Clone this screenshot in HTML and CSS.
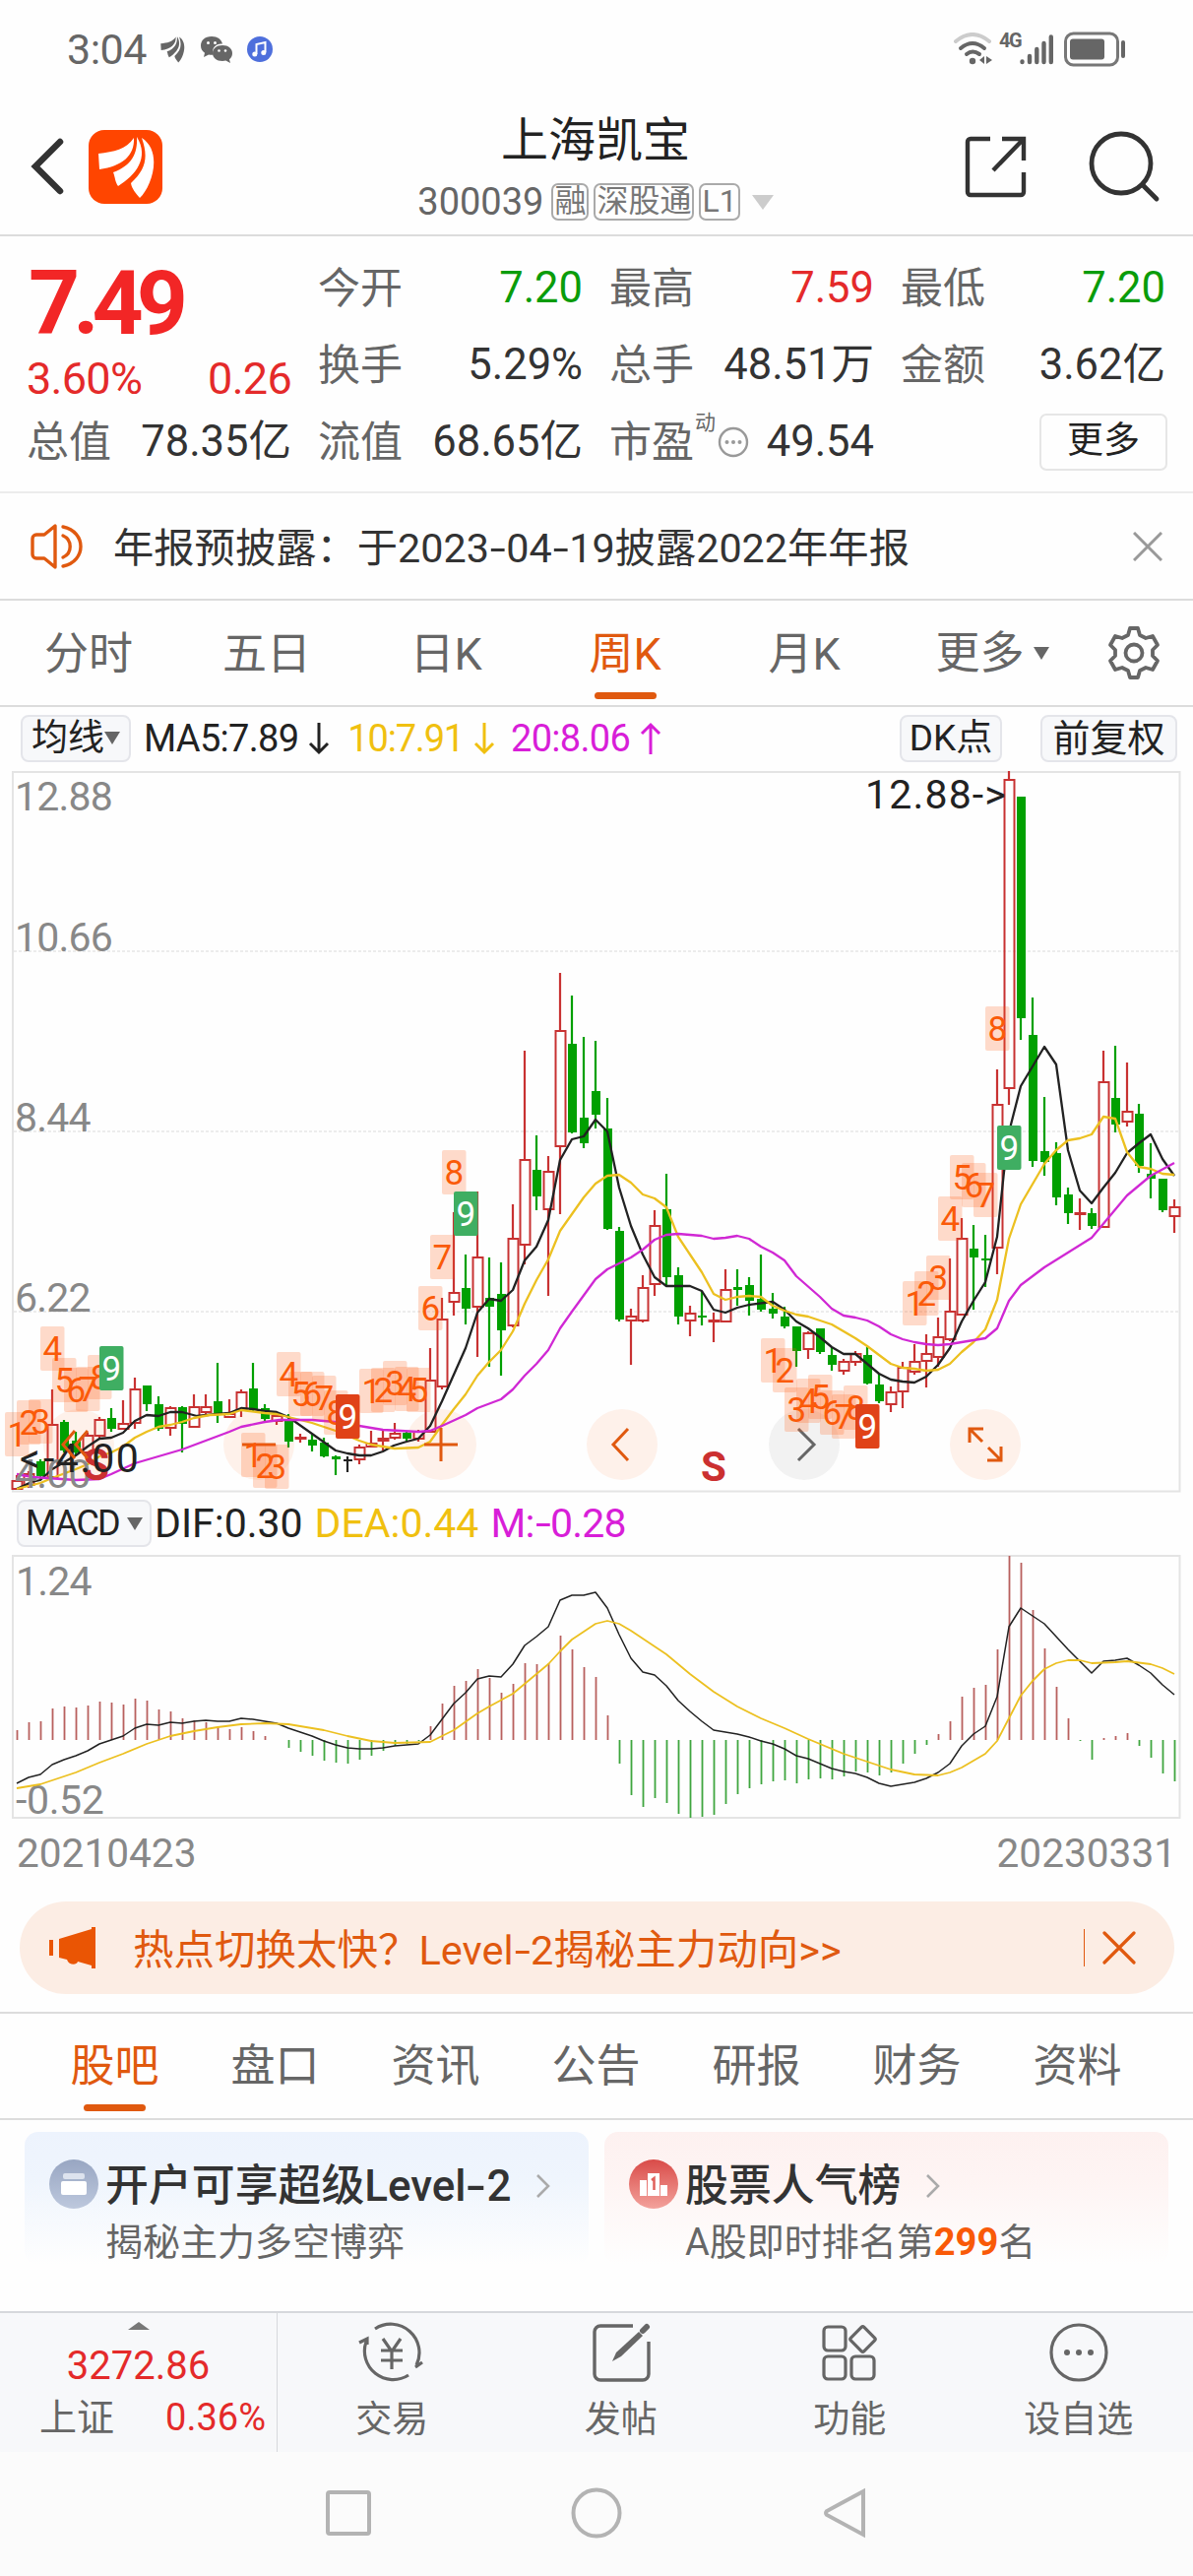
FILE: index.html
```html
<!DOCTYPE html>
<html lang="zh-CN">
<head>
    <meta charset="UTF-8">
    <meta name="viewport" content="width=device-width, initial-scale=1.0">
    <title>上海凯宝 300039</title>
    <link rel="stylesheet" href="styles.css">
</head>
<body>
    <svg class="defs" width="0" height="0">
        <defs>
            <g id="wings">
                <path d="M10 24C26 22 38 20 46 8C47 26 34 37 11 40Z"/>
                <path d="M49 7C50 24 44 36 25 43C27 48 27 53 30 57C48 46 62 28 49 7Z"/>
                <path d="M54 8C61 28 58 40 43 54C44 60 48 64 52 69C64 58 76 22 54 8Z"/>
            </g>
            <linearGradient id="blueDot" x1="0" y1="0" x2="0" y2="1">
                <stop offset="0" stop-color="#98a6c2"/><stop offset="1" stop-color="#bdc8dd"/>
            </linearGradient>
            <linearGradient id="redDot" x1="0" y1="0" x2="0" y2="1">
                <stop offset="0" stop-color="#d94b48"/><stop offset="1" stop-color="#f3a29c"/>
            </linearGradient>
        </defs>
    </svg>

    <div class="status-bar">
        <span class="clock">3:04</span>
        <svg class="st-wing" width="32" height="34" viewBox="0 0 75 75" fill="#666"><use href="#wings"/></svg>
        <svg class="st-chat" width="34" height="28" viewBox="0 0 34 28">
            <path fill="#666" d="M12 1C5 1 1 5 1 10.500c0 3.500 1.500 5.500 4 7.200L4 22l5-2.600c1.500.4 3 .4 4.500.3C11.500 12 17 8 23 8.600 22 4 18 1 12 1z"/>
            <path fill="#666" d="M23 10c-6 0-10 3.500-10 8s4 8 10 8c1.300 0 2.300-.2 3.400-.5L31 28l-1-3.800c2-1.400 3-3.400 3-6.200 0-4.500-4-8-10-8z"/>
            <g fill="#fff"><circle cx="8.500" cy="7.500" r="1.500"/><circle cx="15.500" cy="7.500" r="1.500"/><circle cx="19.500" cy="15.500" r="1.300"/><circle cx="26" cy="15.500" r="1.300"/></g>
        </svg>
        <svg class="st-music" width="28" height="28" viewBox="0 0 28 28">
            <circle cx="14" cy="14" r="13" fill="#4e6fdc"/>
            <path d="M10.500 19V9l9-2v10" fill="none" stroke="#fff" stroke-width="2"/>
            <circle cx="8.800" cy="19" r="2.500" fill="#fff"/><circle cx="17.800" cy="17.500" r="2.500" fill="#fff"/>
        </svg>
        <div class="status-right">
            <svg width="42" height="34" viewBox="0 0 42 34" fill="none" stroke="#666" stroke-width="4" stroke-linecap="round">
                <path d="M3 9Q20 -5 37 9" stroke="#ccc"/>
                <path d="M8 16Q20 6 32 16"/>
                <path d="M14 22Q20 17 27 22"/>
                <circle cx="20" cy="29" r="3.200" fill="#666" stroke="none"/>
                <path d="M32 24v8l-5-4zM34 24v8l6-4z" fill="#666" stroke="none"/>
            </svg>
            <span class="net">4G</span>
            <svg class="st-bars" width="36" height="34" viewBox="0 0 36 34" stroke="#666" stroke-width="4.400" stroke-linecap="round">
                <path d="M3.500 29.500v.5M11 24v6M18.300 17v13M25.500 11v19M32.800 4.500V30"/>
            </svg>
            <svg width="64" height="36" viewBox="0 0 64 36">
                <rect x="1.500" y="2" width="53" height="32" rx="8" fill="none" stroke="#777" stroke-width="3"/>
                <rect x="6" y="7.500" width="35" height="21" rx="3" fill="#666"/>
                <rect x="58" y="9" width="4" height="18" rx="2" fill="#666"/>
            </svg>
        </div>
    </div>

    <div class="header">
        <div class="header-left">
            <svg width="34" height="58" viewBox="0 0 34 58"><path d="M30 4L5 29L30 54" fill="none" stroke="#333" stroke-width="6.500" stroke-linecap="round"/></svg>
            <svg class="logo" width="75" height="75" viewBox="0 0 75 75"><rect width="75" height="75" rx="16" fill="#ff4500"/><use href="#wings" fill="#fff"/></svg>
        </div>
        <div class="header-title">
            <h1>上海凯宝</h1>
            <div class="code-row">
                <span class="code">300039</span><span class="tag">融</span><span class="tag">深股通</span><span class="tag">L1</span><i class="tri tri-light"></i>
            </div>
        </div>
        <div class="header-right">
            <svg width="64" height="64" viewBox="0 0 64 64" fill="none" stroke="#333" stroke-width="4.400">
                <path d="M26 4H6a3 3 0 0 0-3 3v51a3 3 0 0 0 3 3h51a3 3 0 0 0 3-3V38M38 4h22v22M59 5L29 36"/>
            </svg>
            <svg width="74" height="74" viewBox="0 0 74 74" fill="none" stroke="#333" stroke-width="4.800" stroke-linecap="round">
                <circle cx="34" cy="34" r="30"/><path d="M56 56L70 70"/>
            </svg>
        </div>
    </div>

    <div class="quote">
        <div class="price">
            <div class="price-now">7.49</div>
            <div class="price-change"><span>3.60%</span><span>0.26</span></div>
        </div>
        <div class="cell"><label>今开</label><b class="down">7.20</b></div>
        <div class="cell"><label>最高</label><b class="up">7.59</b></div>
        <div class="cell"><label>最低</label><b class="down">7.20</b></div>
        <div class="cell"><label>换手</label><b>5.29%</b></div>
        <div class="cell"><label>总手</label><b>48.51万</b></div>
        <div class="cell"><label>金额</label><b>3.62亿</b></div>
        <div class="cell"><label>总值</label><b>78.35亿</b></div>
        <div class="cell"><label>流值</label><b>68.65亿</b></div>
        <div class="cell"><label>市盈<sup>动</sup></label>
            <svg class="tip" width="32" height="32" viewBox="0 0 32 32"><circle cx="16" cy="16" r="14" fill="none" stroke="#999" stroke-width="2.400"/><g fill="#999"><circle cx="9.500" cy="16" r="2"/><circle cx="16" cy="16" r="2"/><circle cx="22.500" cy="16" r="2"/></g></svg>
            <b>49.54</b></div>
        <div class="cell cell-end"><span class="more-btn">更多</span></div>
    </div>

    <div class="notice">
        <svg width="54" height="48" viewBox="0 0 54 48" fill="none" stroke="#e0590f" stroke-width="3.400" stroke-linejoin="round" stroke-linecap="round">
            <path d="M25 3v42L14 36H6a4 4 0 0 1-4-4V16a4 4 0 0 1 4-4h8zM33 13a12 12 0 0 1 0 22M33 4c24 5 24 35 0 40"/>
        </svg>
        <span class="notice-text">年报预披露：于2023<em>-</em>04<em>-</em>19披露2022年年报</span>
        <svg width="30" height="30" viewBox="0 0 30 30" stroke="#999" stroke-width="3"><path d="M1 1L29 29M29 1L1 29"/></svg>
    </div>

    <div class="period-tabs">
        <div class="tab">分时</div>
        <div class="tab">五日</div>
        <div class="tab">日K</div>
        <div class="tab active">周K</div>
        <div class="tab">月K</div>
        <div class="tab tab-more">更多<i class="tri"></i></div>
        <div class="tab-gear">
            <svg width="56" height="56" viewBox="0 0 56 56" fill="none" stroke="#666" stroke-width="3.800" stroke-linejoin="round">
                <path d="M24 3h8l2 7 6 3 7-2 5 9-5 5v6l5 5-5 9-7-2-6 3-2 7h-8l-2-7-6-3-7 2-5-9 5-5v-6l-5-5 5-9 7 2 6-3z"/>
                <circle cx="28" cy="28" r="8.500"/>
            </svg>
        </div>
    </div>

    <div class="ind-row">
        <span class="chip">均线<i class="tri tri-sm"></i></span>
        <span class="ma ma5">MA5:7.89<svg width="22" height="34" viewBox="0 0 22 34"><path d="M11 1V31M2 22L11 31L20 22"/></svg></span>
        <span class="ma ma10">10:7.91<svg width="22" height="34" viewBox="0 0 22 34"><path d="M11 1V31M2 22L11 31L20 22"/></svg></span>
        <span class="ma ma20">20:8.06<svg width="22" height="34" viewBox="0 0 22 34"><path d="M11 33V3M2 12L11 3L20 12"/></svg></span>
        <span class="chip chip-dk">DK点</span>
        <span class="chip chip-fq">前复权</span>
    </div>

    <svg id="kline" class="chart" width="1212" height="732" viewBox="0 783 1212 732"></svg>

    <div class="macd-row">
        <span class="chip chip-macd">MACD<i class="tri tri-sm"></i></span>
        <span class="dif">DIF:0.30</span>
        <span class="dea">DEA:0.44</span>
        <span class="m">M:<em>-</em>0.28</span>
    </div>

    <svg id="macd" class="chart" width="1212" height="268" viewBox="0 1579 1212 268"></svg>

    <div class="dates"><span>20210423</span><span>20230331</span></div>

    <div class="banner">
        <svg width="48" height="42" viewBox="0 0 48 42" fill="#ea5504">
            <path d="M0 13h4v16H0zM10 12L43 2V0h4v42h-4v-3l-14-4c-1 4-9 4-11-2l-8-2z"/>
        </svg>
        <span class="banner-text">热点切换太快？Level<em>-</em>2揭秘主力动向&gt;&gt;</span>
        <i class="banner-sep"></i>
        <svg width="34" height="34" viewBox="0 0 34 34" stroke="#e0590f" stroke-width="3.200" stroke-linecap="round"><path d="M2 2L32 32M32 2L2 32"/></svg>
    </div>

    <div class="info-tabs">
        <div class="tab active">股吧</div>
        <div class="tab">盘口</div>
        <div class="tab">资讯</div>
        <div class="tab">公告</div>
        <div class="tab">研报</div>
        <div class="tab">财务</div>
        <div class="tab">资料</div>
    </div>

    <div class="cards">
        <div class="card card-blue">
            <svg class="card-icon" width="50" height="50" viewBox="0 0 50 50"><circle cx="25" cy="25" r="25" fill="url(#blueDot)"/><rect x="14" y="14" width="22" height="6" rx="2" fill="#dde3ee"/><rect x="12" y="22" width="26" height="14" rx="2" fill="#fff"/></svg>
            <div>
                <div class="card-title">开户可享超级Level<em>-</em>2<svg width="16" height="26" viewBox="0 0 16 26"><path d="M2 2L13 13L2 24"/></svg></div>
                <div class="card-sub">揭秘主力多空博弈</div>
            </div>
        </div>
        <div class="card card-red">
            <svg class="card-icon" width="50" height="50" viewBox="0 0 50 50"><circle cx="25" cy="25" r="25" fill="url(#redDot)"/><path d="M11 21h7v16h-7zM19 14h12v23H19zM32 26h7v11h-7z" fill="#fff"/><path d="M23 21l2.500-2v12" fill="none" stroke="#e0605b" stroke-width="2.500"/></svg>
            <div>
                <div class="card-title">股票人气榜<svg width="16" height="26" viewBox="0 0 16 26"><path d="M2 2L13 13L2 24"/></svg></div>
                <div class="card-sub">A股即时排名第<strong>299</strong>名</div>
            </div>
        </div>
    </div>

    <div class="bottom-bar">
        <div class="index-cell">
            <i class="caret-up"></i>
            <div class="index-value">3272.86</div>
            <div class="index-row"><span>上证</span><span class="up">0.36%</span></div>
        </div>
        <div class="nav-item">
            <svg width="70" height="62" viewBox="0 0 70 62" fill="none" stroke="#666" stroke-width="3.200">
                <path d="M18 7A29 29 0 0 1 60 44M66 41l-7 5M52 54A29 29 0 0 1 9 20M2 21l8-4v6"/>
                <path d="M26 17l9 13 9-13M35 30v18M24 29h22M24 39h22"/>
            </svg>
            <span>交易</span>
        </div>
        <div class="nav-item">
            <svg width="60" height="62" viewBox="0 0 60 62" fill="none" stroke="#666" stroke-width="3.400">
                <path d="M42 4H9a6 6 0 0 0-6 6v43a6 6 0 0 0 6 6h43a6 6 0 0 0 6-6V20"/>
                <path d="M21 40l4-9L48 10l4 4-22 21z" fill="#666" stroke="none"/><path d="M52 9l4-4" stroke-width="6" stroke-linecap="round"/>
            </svg>
            <span>发帖</span>
        </div>
        <div class="nav-item">
            <svg width="60" height="62" viewBox="0 0 60 62" fill="none" stroke="#666" stroke-width="3.200">
                <rect x="4" y="5" width="22" height="24" rx="4"/><rect x="4" y="35" width="22" height="23" rx="4"/><rect x="32" y="35" width="23" height="23" rx="4"/>
                <rect x="34" y="8" width="19" height="19" rx="2" transform="rotate(45 43.500 17.500)"/>
            </svg>
            <span>功能</span>
        </div>
        <div class="nav-item">
            <svg width="60" height="62" viewBox="0 0 60 62" fill="none" stroke="#666" stroke-width="3.200">
                <circle cx="30" cy="31" r="28"/><g fill="#666" stroke="none"><circle cx="18" cy="31" r="3"/><circle cx="30" cy="31" r="3"/><circle cx="42" cy="31" r="3"/></g>
            </svg>
            <span>设自选</span>
        </div>
    </div>

    <div class="sys-nav">
        <svg width="46" height="48" viewBox="0 0 46 48"><rect x="2" y="3" width="42" height="42" rx="2"/></svg>
        <svg width="52" height="52" viewBox="0 0 52 52"><circle cx="26" cy="26" r="23.500"/></svg>
        <svg width="48" height="52" viewBox="0 0 48 52"><path d="M42 4V48L5 28Q3 26 5 24Z"/></svg>
    </div>

    <script src="chart.js"></script>
</body>
</html>
```
FILE: styles.css
```css
* {
    margin: 0;
    padding: 0;
    box-sizing: border-box;
}

body {
    width: 1212px;
    height: 2616px;
    background-color: #fefefe;
    color: #333;
    font-family: Roboto, "Noto Sans CJK SC", sans-serif;
    overflow: hidden;
}

svg {
    display: block;
    flex: none;
}

.defs {
    position: absolute;
}

/* wide dash, longer than the font's hyphen */
em {
    display: inline-block;
    font-style: normal;
    transform: scaleX(1.4);
    margin: 0 3px;
}

.up {
    color: #e42a2a;
}

.down {
    color: #0a9c0a;
}

.tri {
    display: inline-block;
    border-left: 8px solid transparent;
    border-right: 8px solid transparent;
    border-top: 13px solid #666;
}

.tri-light {
    border-left-width: 11px;
    border-right-width: 11px;
    border-top: 15px solid #ccc;
    margin-left: 7px;
}

/* status bar */
.status-bar {
    height: 100px;
    padding: 0 67px 0 68px;
    display: flex;
    align-items: center;
}

.clock {
    font-size: 43px;
    color: #666;
    width: 91px;
    letter-spacing: -0.5px;
}

.st-chat {
    margin-left: 12px;
}

.st-music {
    margin-left: 13px;
}

.status-right {
    margin-left: auto;
    display: flex;
    align-items: center;
}

.net {
    font-size: 20px;
    font-weight: 700;
    color: #666;
    align-self: flex-start;
    line-height: 18px;
    width: 20px;
    margin-left: 5px;
    letter-spacing: -1.5px;
}

.st-bars {
    margin-right: 10px;
}

/* header */
.header {
    height: 140px;
    border-bottom: 2px solid #dcdcdc;
    display: flex;
    justify-content: space-between;
    padding: 0 33px 0 31px;
}

.header-left,
.header-right {
    display: flex;
    align-items: center;
    width: 220px;
}

.header-right {
    justify-content: flex-end;
    gap: 61px;
}

.logo {
    margin-left: 25px;
}

.header-title {
    display: flex;
    flex-direction: column;
    align-items: center;
    padding-top: 14px;
}

.header-title h1 {
    font-size: 48px;
    font-weight: 400;
    line-height: 58px;
    color: #222;
}

.code-row {
    display: flex;
    align-items: center;
    margin-top: 14px;
    height: 38px;
}

.code {
    font-size: 38px;
    color: #666;
    margin-right: 8px;
}

.tag {
    height: 38px;
    border: 2px solid #aaa;
    border-radius: 7px;
    font-size: 32px;
    line-height: 33px;
    padding: 0 1px;
    margin-right: 5px;
    color: #777;
}

/* quote grid */
.quote {
    height: 261px;
    border-bottom: 2px solid #ececec;
    padding: 14px 27px 0;
    display: grid;
    grid-template-columns: repeat(4, 269px);
    grid-template-rows: repeat(3, 78px);
    column-gap: 27px;
}

.price {
    grid-row: span 2;
}

.price-now {
    font-size: 91px;
    font-weight: 700;
    line-height: 108px;
    color: #f22626;
    letter-spacing: -7px;
    padding-left: 2px;
}

.price-change {
    display: flex;
    justify-content: space-between;
    font-size: 45px;
    line-height: 46px;
    color: #e42a2a;
    letter-spacing: -0.7px;
}

.cell {
    display: flex;
    align-items: center;
    justify-content: space-between;
    font-size: 43px;
    line-height: 78px;
    white-space: nowrap;
}

.cell label {
    color: #666;
    position: relative;
}

.cell b {
    font-size: 43.500px;
    font-weight: 400;
}

.cell sup {
    position: absolute;
    left: 87px;
    top: -20px;
    font-size: 21px;
}

.tip {
    margin-left: 24px;
    margin-right: auto;
}

.cell-end {
    justify-content: flex-end;
    padding-right: 0;
}

.more-btn {
    width: 130px;
    height: 58px;
    margin-right: -2px;
    border: 2px solid #e6e6e6;
    border-radius: 7px;
    font-size: 37px;
    line-height: 52px;
    text-align: center;
    color: #222;
}

/* notice */
.notice {
    height: 109px;
    border-bottom: 2px solid #dcdcdc;
    display: flex;
    align-items: center;
    padding: 0 31px;
}

.notice-text {
    flex: 1;
    margin-left: 30px;
    font-size: 41.300px;
    padding-bottom: 4px;
}

/* tabs */
.period-tabs,
.info-tabs {
    display: flex;
    height: 108px;
    border-bottom: 2px solid #dcdcdc;
}

.tab {
    width: 182px;
    font-size: 45px;
    line-height: 108px;
    text-align: center;
    color: #666;
    display: flex;
    flex-direction: column;
    align-items: center;
}

.period-tabs .tab {
    height: 106px;
    line-height: 109px;
}

.period-tabs .tab:first-child {
    width: 180px;
}

.period-tabs .tab-more {
    width: 184px;
    padding-left: 16px;
    flex-direction: row;
    justify-content: center;
    gap: 9px;
}

.tab.active {
    color: #e0590f;
}

.tab.active::after {
    content: "";
    width: 63px;
    height: 7px;
    border-radius: 4px;
    background-color: #e0590f;
    margin-top: -16px;
    flex: none;
}

.tab-gear {
    display: flex;
    align-items: center;
    justify-content: center;
    width: 120px;
}

/* indicator rows */
.ind-row,
.macd-row {
    display: flex;
    align-items: center;
    white-space: nowrap;
    color: #222;
}

.ind-row {
    height: 65px;
    padding: 0 16px 2px 21px;
    font-size: 38px;
}

.chip {
    display: flex;
    align-items: center;
    justify-content: center;
    height: 48px;
    padding: 0 9px;
    border: 2px solid #e4e5ea;
    border-radius: 8px;
    background-color: #f7f8fa;
    font-size: 37px;
    line-height: 40px;
}

.chip-dk {
    margin-left: auto;
    margin-right: 39px;
    width: 104px;
}

.chip-fq {
    width: 139px;
    font-size: 38px;
}

.chip-macd {
    width: 137px;
    font-size: 36px;
    letter-spacing: -1.8px;
    gap: 8px;
}

.ma {
    display: flex;
    align-items: center;
    margin-left: 13px;
    letter-spacing: -0.7px;
}

.ma svg {
    fill: none;
    stroke: currentColor;
    stroke-width: 3;
    margin-left: 10px;
}

.ma10,
.dea {
    color: #f0c010;
}

.ma10 {
    letter-spacing: -1.2px;
    margin-left: 18px;
}

.ma20,
.m {
    color: #d81ed8;
}

.ma20 {
    margin-left: 16px;
}

.chart {
    font-size: 41px;
    letter-spacing: -0.8px;
    overflow: visible;
}

.macd-row {
    height: 64px;
    padding-left: 17px;
    font-size: 41px;
    gap: 12px;
}

.dif {
    margin-left: -9px;
}

.m {
    letter-spacing: -0.8px;
}

.dates {
    display: flex;
    justify-content: space-between;
    padding: 7px 17px 0;
    height: 84px;
    font-size: 40.600px;
    line-height: 56px;
    color: #888;
}

/* banner */
.banner {
    margin: 0 19px 18px 20px;
    height: 94px;
    border-radius: 47px;
    background-color: #fcede4;
    color: #e0590f;
    display: flex;
    align-items: center;
    padding: 0 39px 0 30px;
}

.banner-text {
    flex: 1;
    margin-left: 37px;
    font-size: 41.500px;
    padding-bottom: 3px;
}

.banner-sep {
    width: 1px;
    height: 38px;
    background-color: #e0590f;
    margin-right: 18px;
}

.info-tabs {
    border-top: 2px solid #dcdcdc;
    height: 110px;
    padding-left: 35px;
}

.info-tabs .tab {
    width: 163px;
    height: 106px;
}

/* cards */
.cards {
    display: flex;
    gap: 16px;
    padding: 12px 25px 0;
    height: 194px;
}

.card {
    width: 573px;
    height: 135px;
    border-radius: 14px;
    display: flex;
    padding: 28px 0 0 25px;
}

.card-blue {
    background: linear-gradient(to bottom, #edf3fd, #eff5fd 35%, #fefefe);
}

.card-red {
    background: linear-gradient(to bottom, #fdf1f0, #fef4f3 35%, #fefefe);
}

.card-title {
    display: flex;
    align-items: center;
    font-size: 43.900px;
    font-weight: 500;
    line-height: 54px;
    margin-left: 7px;
    white-space: nowrap;
}

.card-title svg {
    margin-left: 25px;
    fill: none;
    stroke: #aaa;
    stroke-width: 2.600;
}

.card-sub {
    font-size: 38px;
    line-height: 50px;
    margin: 5px 0 0 7px;
    color: #666;
    white-space: nowrap;
}

.card-sub strong {
    color: #f95a08;
}

/* bottom bar */
.bottom-bar {
    height: 143px;
    border-top: 2px solid #d6d8dc;
    background-color: #f7f8fa;
    display: flex;
}

.index-cell {
    width: 282px;
    border-right: 1px solid #d6d8dc;
    display: flex;
    flex-direction: column;
    align-items: center;
}

.caret-up {
    border-left: 11px solid transparent;
    border-right: 11px solid transparent;
    border-bottom: 8px solid #777;
    margin-top: 9px;
}

.index-value {
    font-size: 40px;
    line-height: 50px;
    margin-top: 12px;
    color: #e42a2a;
}

.index-row {
    display: flex;
    justify-content: space-between;
    align-self: stretch;
    padding: 0 11px 0 40px;
    font-size: 38px;
    line-height: 54px;
    color: #666;
}

.index-row .up {
    color: #e42a2a;
}

.nav-item {
    width: 232.500px;
    display: flex;
    flex-direction: column;
    align-items: center;
    padding-top: 9px;
    font-size: 37px;
    color: #666;
}

.nav-item span {
    line-height: 50px;
    margin-top: 13px;
}

.sys-nav {
    height: 126px;
    background-color: #fbfbfb;
    display: flex;
    align-items: center;
    padding: 0 0 2px 331px;
    gap: 203px;
    fill: none;
    stroke: #b3b3b3;
    stroke-width: 4;
}
```
FILE: chart.js
```js
// candle: [colour, high, low, top, bottom]
const candles = [
    ['r',1498,1513,1504,1512],['r',1494,1511,1497,1508],['g',1482,1502,1484,1499],['r',1411,1501,1447,1500],
    ['g',1442,1475,1444,1473],['g',1454,1478,1463,1475],['r',1455,1482,1458,1475],['r',1439,1460,1442,1458],
    ['g',1430,1454,1440,1451],['r',1422,1452,1446,1451],['r',1399,1451,1411,1445],['g',1407,1433,1407,1426],
    ['g',1418,1453,1426,1451],['r',1428,1458,1430,1450],['g',1428,1475,1429,1446],['r',1416,1450,1429,1449],
    ['r',1416,1436,1429,1434],['g',1384,1445,1423,1436],['r',1421,1440,1436,1439],['r',1411,1439,1414,1432],
    ['g',1384,1433,1410,1432],['g',1426,1443,1430,1441],['r',1435,1447,1438,1443],['g',1436,1470,1441,1464],
    ['r',1456,1465,1460,1461],['g',1457,1474,1462,1468],['g',1460,1480,1465,1479],['g',1478,1498,1479,1482],
    ['k',1479,1495,1482,1484],['r',1467,1487,1470,1482],['r',1453,1470,1466,1469],['r',1453,1473,1461,1463],
    ['r',1445,1462,1456,1460],['g',1453,1463,1455,1461],['r',1452,1464,1454,1461],['r',1369,1455,1402,1454],
    ['r',1318,1411,1340,1408],['r',1231,1336,1313,1322],['g',1274,1345,1308,1329],['r',1210,1378,1277,1327],
    ['g',1277,1388,1318,1327],['g',1282,1397,1314,1351],['r',1223,1348,1258,1346],['r',1067,1284,1178,1264],
    ['g',1153,1229,1188,1215],['r',1174,1316,1190,1228],['r',988,1233,1047,1164],['g',1011,1151,1060,1150],
    ['g',1053,1166,1135,1161],['g',1057,1146,1108,1132],['g',1115,1249,1146,1248],['g',1246,1342,1250,1340],
    ['r',1329,1386,1337,1341],['r',1295,1343,1308,1341],['r',1229,1316,1245,1304],['g',1192,1307,1228,1297],
    ['g',1287,1345,1295,1337],['r',1326,1357,1334,1341],['g',1311,1346,1336,1338],['r',1333,1363,1341,1342],
    ['r',1289,1343,1310,1342],['g',1289,1326,1307,1310],['g',1297,1336,1305,1321],['g',1274,1332,1319,1330],
    ['g',1313,1339,1329,1334],['g',1327,1349,1337,1347],['g',1347,1388,1347,1372],['r',1352,1380,1354,1370],
    ['g',1349,1375,1349,1373],['g',1368,1392,1376,1386],['r',1380,1396,1383,1392],['r',1372,1387,1375,1383],
    ['g',1368,1406,1376,1405],['g',1395,1425,1406,1423],['r',1408,1434,1414,1426],['r',1383,1430,1389,1413],
    ['r',1365,1396,1383,1393],['r',1355,1409,1375,1382],['r',1338,1388,1358,1378],['r',1278,1362,1332,1360],
    ['r',1237,1336,1258,1335],['g',1244,1330,1268,1277],['g',1254,1307,1278,1280],['r',1086,1294,1122,1267],
    ['r',783,1122,792,1105],['g',809,1056,809,1034],['g',1013,1185,1051,1179],['g',1114,1194,1169,1180],
    ['g',1160,1224,1171,1216],['g',1206,1243,1213,1232],['r',1217,1249,1232,1233],['g',1227,1248,1232,1245],
    ['r',1067,1247,1099,1246],['g',1062,1150,1115,1142],['r',1079,1144,1129,1139],['g',1121,1191,1131,1184],
    ['g',1161,1217,1192,1197],['g',1197,1231,1197,1229],['r',1218,1252,1226,1235]
];

const ma5 = '17,1512 32,1505 41,1503 53,1492 65,1485 77,1478 89,1469 101,1461 113,1460 125,1455 137,1443 149,1437 161,1438 173,1434 185,1434 200,1438 221,1436 233,1435 245,1430 257,1431 269,1433 281,1434 293,1439 341,1473 353,1476 365,1478 377,1478 389,1474 400,1468 413,1464 425,1461 437,1448 449,1423 461,1396 473,1369 485,1333 497,1319 509,1321 521,1310 533,1280 545,1266 557,1239 569,1178 581,1157 593,1154 605,1137 617,1149 629,1206 641,1245 653,1274 665,1297 677,1306 701,1306 713,1311 725,1330 737,1333 749,1328 761,1325 785,1322 797,1330 809,1342 821,1349 833,1358 845,1368 857,1375 869,1375 881,1385 893,1395 905,1401 917,1403 929,1404 941,1398 953,1386 965,1369 977,1342 989,1321 1001,1302 1013,1256 1020,1190 1027,1142 1037,1103 1049,1083 1061,1063 1073,1081 1085,1168 1097,1209 1109,1222 1121,1206 1133,1191 1145,1171 1157,1161 1169,1152 1181,1177 1193,1194';
const ma10 = '17,1512 41,1506 53,1501 77,1492 89,1487 101,1479 113,1475 125,1469 137,1460 149,1454 161,1449 173,1447 185,1444 197,1440 213,1437 233,1436 245,1432 269,1435 281,1436 293,1439 317,1445 341,1453 365,1463 377,1467 389,1469 401,1471 425,1470 437,1464 449,1447 461,1431 473,1416 485,1397 497,1383 509,1371 521,1352 533,1324 545,1300 557,1279 569,1250 581,1233 593,1216 605,1202 617,1194 629,1193 641,1201 653,1213 665,1217 677,1226 689,1256 701,1274 713,1292 725,1314 737,1320 749,1317 761,1316 773,1317 785,1326 797,1331 809,1335 821,1337 833,1341 845,1345 857,1352 869,1359 881,1367 893,1376 905,1385 917,1389 929,1390 941,1392 953,1391 965,1385 977,1373 989,1363 1001,1350 1013,1320 1025,1258 1037,1223 1061,1182 1073,1168 1085,1158 1097,1156 1109,1152 1121,1134 1133,1136 1145,1170 1157,1185 1169,1187 1181,1192 1193,1193';
const ma20 = '17,1497 33,1500 77,1503 101,1502 113,1497 137,1486 161,1479 185,1472 209,1463 233,1454 245,1449 269,1444 284,1442 317,1442 341,1444 365,1448 389,1452 425,1454 437,1453 449,1448 473,1437 485,1430 509,1421 521,1411 533,1397 545,1385 557,1371 569,1349 581,1332 605,1299 617,1289 641,1277 653,1269 665,1259 677,1254 689,1253 713,1255 725,1258 737,1257 749,1255 761,1258 773,1266 785,1272 797,1280 809,1296 833,1317 845,1329 857,1336 869,1338 881,1341 893,1347 905,1355 917,1360 929,1363 941,1365 953,1366 965,1365 977,1363 1001,1359 1013,1349 1025,1321 1037,1305 1061,1287 1085,1272 1109,1257 1145,1214 1169,1194 1193,1181';

// badge: [candle index, digit, top, fill]
const badges = [
    [0,1,1434],[1,2,1422],[2,3,1421],[3,4,1347],[4,5,1379],[5,6,1389],[6,7,1388],[7,8,1376],[8,9,1367,'#3fae62'],
    [20,1,1455],[21,2,1466],[22,3,1467],[23,4,1373],[24,5,1393],[25,6,1393],[26,7,1397],[27,8,1412],[28,9,1416,'#e04218'],
    [30,1,1390],[31,2,1389],[32,3,1382],[33,4,1388],[34,5,1389],[35,6,1306],[36,7,1254],[37,8,1168],[38,9,1210,'#3fae62'],
    [64,1,1359],[65,2,1369],[66,3,1409],[67,4,1400],[68,5,1396],[69,6,1412],[70,7,1416],[71,8,1407],[72,9,1426,'#e04218'],
    [76,1,1301],[77,2,1291],[78,3,1275],[79,4,1215],[80,5,1173],[81,6,1181],[82,7,1191],[83,8,1022],[84,9,1143,'#3fae62']
];

const x = i => 17 + 12 * i;
const colors = { r: '#c83232', g: '#01a001', k: '#222' };
const line = (points, color, w) => `<polyline points="${points}" fill="none" stroke="${color}" stroke-width="${w}" stroke-linejoin="round"/>`;
const frame = (y, h) => `<rect x="13" y="${y}" width="1185.500" height="${h}" fill="none" stroke="#e4e4e4" stroke-width="2"/>`;
const text = (s, tx, ty, color, extra = '') => `<text x="${tx}" y="${ty}" fill="${color}" ${extra}>${s}</text>`;

let k = frame(784, 730.5);
[966, 1149, 1332].forEach(y => {
    k += `<path d="M14 ${y}H1197" stroke="#ececec" stroke-width="2" stroke-dasharray="3 2"/>`;
});

// round buttons
[80, 263, 448, 632, 817, 1001].forEach(cx => {
    k += `<circle cx="${cx}" cy="1467" r="36" fill="${cx === 817 ? '#f2f2f2' : '#fef1ea'}"/>`;
});

candles.forEach(([c, high, low, top, bottom], i) => {
    const cx = x(i), col = colors[c];
    k += `<path d="M${cx} ${high}V${top}M${cx} ${bottom}V${low}" stroke="${col}" stroke-width="2.200"/>`;
    if (c === 'r') {
        k += `<rect x="${cx - 4.5}" y="${top}" width="10" height="${bottom - top}" fill="none" stroke="${col}" stroke-width="2"/>`;
    } else {
        k += `<rect x="${cx - 4}" y="${top}" width="9" height="${bottom - top}" fill="${col}"/>`;
    }
});

k += line(ma5, '#222', 2.3) + line(ma10, '#ecc020', 2.3) + line(ma20, '#d028d4', 2.3);

['12.88', '10.66', '8.44', '6.22', '4.00'].forEach((s, i) => {
    k += text(s, 15, [823, 966, 1149, 1332, 1511][i], '#888');
});
k += text('S', 84, 1503, '#cb3030', 'font-size="44" font-weight="700"');
k += text('S', 712, 1504, '#cb3030', 'font-size="42" font-weight="700"');
k += text('&lt;', 20, 1495, '#222') + text('-4.00', 44, 1495, '#222', 'textLength="96"');
k += text('12.88-&gt;', 879, 821, '#222', 'textLength="142"');

k += `<g fill="none" stroke="#e0590f" stroke-width="3">
    <path d="M76 1453L64 1467L76 1481M89 1453L77 1467L89 1481M246 1467H280M431 1467H465M448 1450V1484M638 1451L623 1467L638 1483"/>
    <path d="M811 1451L827 1467L811 1483" stroke="#666"/>
    <path d="M985 1465V1451H999M985 1451L998 1464M1017 1469V1483H1003M1017 1483L1004 1470"/></g>`;

badges.forEach(([i, n, top, fill]) => {
    k += `<rect x="${x(i) - 12}" y="${top}" width="24.500" height="45" rx="2" fill="${fill || '#ff5a14'}" fill-opacity="${fill ? 1 : 0.22}"/>`;
    k += text(n, x(i), top + 35, fill ? '#fff' : '#fa5a08', 'font-size="35" text-anchor="middle"');
});
document.getElementById('kline').innerHTML = k;

// MACD pane, bars grow from the zero line
const zero = 1767;
const bars = [1757,1749,1748,1735,1733,1734,1732,1728,1729,1731,1725,1727,1736,1738,1745,1747,1749,1754,1756,1754,1758,1763,1767,1775,1779,1783,1788,1790,1791,1787,1783,1778,1773,1771,1768,1753,1730,1712,1707,1695,1704,1719,1710,1689,1690,1689,1661,1675,1693,1703,1742,1791,1823,1835,1826,1831,1842,1846,1845,1843,1832,1822,1816,1812,1809,1808,1811,1807,1806,1807,1804,1799,1800,1803,1800,1791,1781,1772,1761,1748,1723,1714,1711,1675,1580,1587,1635,1674,1713,1745,1768,1787,1765,1763,1760,1773,1785,1801,1809];
const dif = [1811,1805,1802,1792,1787,1783,1778,1771,1767,1763,1755,1751,1752,1749,1750,1748,1747,1748,1748,1745,1746,1748,1750,1755,1759,1763,1768,1772,1775,1776,1776,1775,1773,1772,1771,1762,1746,1730,1719,1705,1702,1703,1690,1671,1662,1652,1625,1620,1620,1617,1633,1660,1684,1698,1701,1712,1727,1738,1748,1757,1759,1761,1764,1768,1771,1776,1783,1786,1791,1796,1799,1801,1805,1811,1814,1812,1810,1806,1800,1791,1773,1761,1753,1723,1652,1633,1641,1649,1662,1675,1687,1699,1687,1686,1684,1691,1699,1711,1721];
const dea = [[0,1816],[2,1812],[5,1800],[7,1790],[9,1781],[11,1771],[13,1763],[15,1758],[17,1754],[19,1751],[21,1750],[23,1751],[26,1757],[28,1763],[30,1768],[32,1770],[35,1769],[37,1757],[39,1740],[40,1733],[42,1720],[44,1700],[45,1690],[46,1677],[47,1665],[48,1657],[49,1649],[50,1646],[51,1649],[52,1656],[54,1672],[55,1680],[57,1700],[59,1718],[61,1733],[63,1745],[65,1755],[67,1766],[70,1781],[72,1789],[74,1797],[76,1802],[78,1803],[79,1800],[80,1795],[82,1781],[83,1768],[84,1745],[85,1722],[86,1707],[87,1695],[88,1689],[89,1686],[90,1686],[91,1689],[93,1688],[94,1687],[96,1690],[97,1694],[98,1700]];

let m = frame(1580, 266);
bars.forEach((y, i) => {
    m += `<path d="M${x(i) + 0.5} ${zero}V${y}" stroke="${y < zero ? '#b8605e' : '#3fa63f'}" stroke-width="1.800"/>`;
});
m += text('1.24', 16, 1620, '#888') + text('-0.52', 16, 1842, '#888', 'textLength="89"');
m += line(dif.map((y, i) => x(i) + ',' + y).join(' '), '#222', 1.5);
m += line(dea.map(([i, y]) => x(i) + ',' + y).join(' '), '#ecc020', 1.8);
document.getElementById('macd').innerHTML = m;
```
